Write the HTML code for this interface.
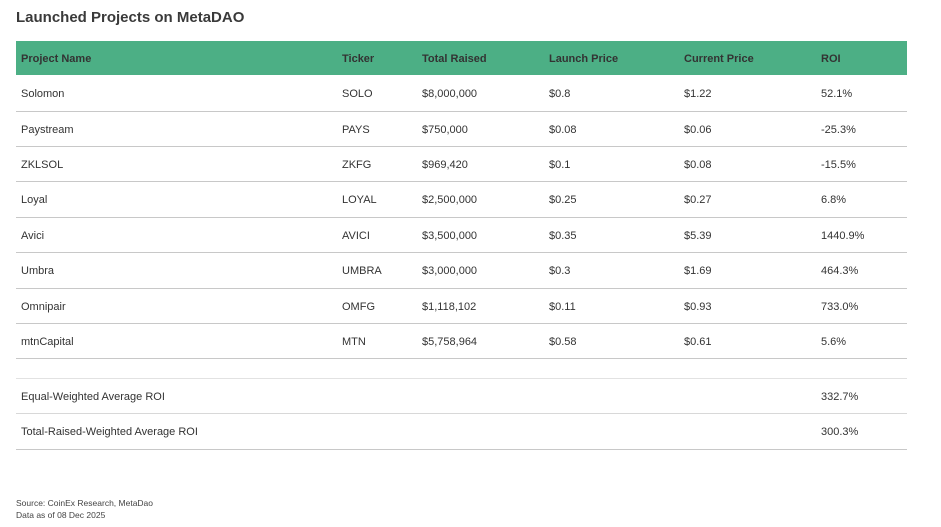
<!DOCTYPE html>
<html><head><style>
body{margin:0;width:941px;height:527px;background:#fff;font-family:"Liberation Sans",sans-serif;color:#333;position:relative;overflow:hidden}
.t{position:absolute;left:16px;top:9px;font-size:15px;font-weight:bold;color:#3a3a3a}
.hd{position:absolute;left:16px;top:41px;width:891px;height:34px;background:#4caf85}
.r{position:absolute;left:16px;width:891px;border-bottom:1.5px solid #c8c8c8}
.c{position:absolute;font-size:11px;white-space:nowrap;top:12px}
.h .c{font-weight:bold;color:#333}
.f{position:absolute;left:16px;font-size:8.5px;color:#444}
</style></head><body>
<div class="t">Launched Projects on MetaDAO</div>
<div class="hd h">
<span class="c" style="left:5px">Project Name</span>
<span class="c" style="left:326px">Ticker</span>
<span class="c" style="left:406px">Total Raised</span>
<span class="c" style="left:533px">Launch Price</span>
<span class="c" style="left:668px">Current Price</span>
<span class="c" style="left:805px">ROI</span>
</div>
<div class="r" style="top:76px;height:35px"><span class="c" style="left:5px">Solomon</span><span class="c" style="left:326px">SOLO</span><span class="c" style="left:406px">$8,000,000</span><span class="c" style="left:533px">$0.8</span><span class="c" style="left:668px">$1.22</span><span class="c" style="left:805px">52.1%</span></div>
<div class="r" style="top:112px;height:34px"><span class="c" style="left:5px">Paystream</span><span class="c" style="left:326px">PAYS</span><span class="c" style="left:406px">$750,000</span><span class="c" style="left:533px">$0.08</span><span class="c" style="left:668px">$0.06</span><span class="c" style="left:805px">-25.3%</span></div>
<div class="r" style="top:147px;height:34px"><span class="c" style="left:5px">ZKLSOL</span><span class="c" style="left:326px">ZKFG</span><span class="c" style="left:406px">$969,420</span><span class="c" style="left:533px">$0.1</span><span class="c" style="left:668px">$0.08</span><span class="c" style="left:805px">-15.5%</span></div>
<div class="r" style="top:182px;height:35px"><span class="c" style="left:5px">Loyal</span><span class="c" style="left:326px">LOYAL</span><span class="c" style="left:406px">$2,500,000</span><span class="c" style="left:533px">$0.25</span><span class="c" style="left:668px">$0.27</span><span class="c" style="left:805px">6.8%</span></div>
<div class="r" style="top:218px;height:34px"><span class="c" style="left:5px">Avici</span><span class="c" style="left:326px">AVICI</span><span class="c" style="left:406px">$3,500,000</span><span class="c" style="left:533px">$0.35</span><span class="c" style="left:668px">$5.39</span><span class="c" style="left:805px">1440.9%</span></div>
<div class="r" style="top:253px;height:35px"><span class="c" style="left:5px">Umbra</span><span class="c" style="left:326px">UMBRA</span><span class="c" style="left:406px">$3,000,000</span><span class="c" style="left:533px">$0.3</span><span class="c" style="left:668px">$1.69</span><span class="c" style="left:805px">464.3%</span></div>
<div class="r" style="top:289px;height:34px"><span class="c" style="left:5px">Omnipair</span><span class="c" style="left:326px">OMFG</span><span class="c" style="left:406px">$1,118,102</span><span class="c" style="left:533px">$0.11</span><span class="c" style="left:668px">$0.93</span><span class="c" style="left:805px">733.0%</span></div>
<div class="r" style="top:324px;height:34px"><span class="c" style="left:5px">mtnCapital</span><span class="c" style="left:326px">MTN</span><span class="c" style="left:406px">$5,758,964</span><span class="c" style="left:533px">$0.58</span><span class="c" style="left:668px">$0.61</span><span class="c" style="left:805px">5.6%</span></div>
<div class="r" style="top:359px;height:19px;border-color:#e2e2e2"></div>
<div class="r" style="top:379px;height:34px;border-color:#d8d8d8"><span class="c" style="left:5px">Equal-Weighted Average ROI</span><span class="c" style="left:805px">332.7%</span></div>
<div class="r" style="top:414px;height:35px"><span class="c" style="left:5px">Total-Raised-Weighted Average ROI</span><span class="c" style="left:805px">300.3%</span></div>
<div class="f" style="top:498px">Source: CoinEx Research, MetaDao</div>
<div class="f" style="top:510px">Data as of 08 Dec 2025</div>
</body></html>
